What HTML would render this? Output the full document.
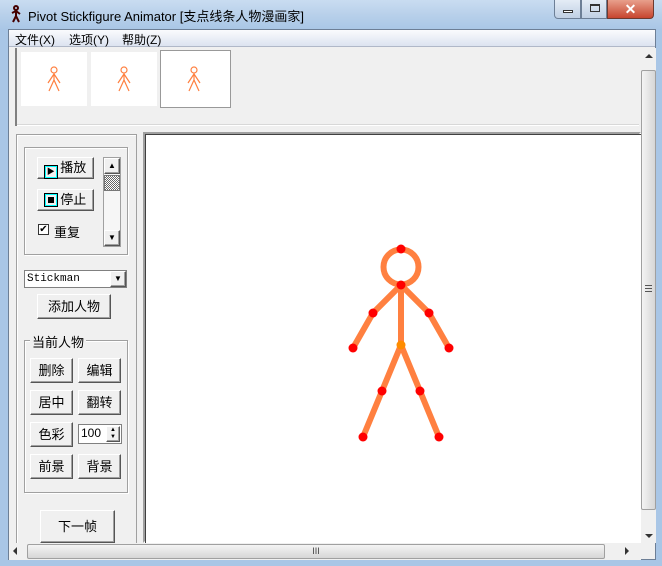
<!DOCTYPE html>
<html><head><meta charset="utf-8"><style>
*{margin:0;padding:0;box-sizing:border-box}
body{width:662px;height:566px;overflow:hidden;background:#a9c6e6;font-family:"Liberation Sans","Noto Sans CJK SC",sans-serif;font-size:12px;color:#000;position:relative}
.abs{position:absolute}
.btn{position:absolute;background:#f0f0f0;border:1px solid;border-color:#fff #555 #555 #fff;box-shadow:-1px -1px 0 #a0a0a0 inset;text-align:center;font-size:13px}
.grp{position:absolute;border:1px solid #a0a0a0;box-shadow:1px 1px 0 #fff inset,1px 1px 0 #fff}
.thumb{position:absolute;top:52px;width:66px;height:54px;background:#fff}
</style></head><body>
<div class="abs" style="left:0;top:0;width:662px;height:30px;background:linear-gradient(#c9dcf1,#b8d0ea 50%,#a9c6e6)"></div>
<svg class="abs" style="left:10px;top:5px" width="12" height="18"><g stroke="#400" stroke-width="2" fill="none"><circle cx="6" cy="3" r="2"/><path d="M6 5V11M2 8L6 6L10 9M3 17L6 11L9 17"/></g></svg>
<div class="abs" style="left:28px;top:6px;font-size:13px;color:#000">Pivot Stickfigure Animator [支点线条人物漫画家]</div>
<div class="abs" style="left:554px;top:0;width:27px;height:19px;border:1px solid #6d7f96;border-top:none;border-radius:0 0 0 4px;background:linear-gradient(#e4ecf6,#c0d0e4)"><div class="abs" style="left:8px;top:10px;width:10px;height:3px;border:1px solid #333;background:#fff"></div></div>
<div class="abs" style="left:581px;top:0;width:26px;height:19px;border:1px solid #6d7f96;border-top:none;background:linear-gradient(#e4ecf6,#c0d0e4)"><div class="abs" style="left:8px;top:4px;width:10px;height:8px;border:1px solid #333;border-top-width:2px"></div></div>
<div class="abs" style="left:607px;top:0;width:47px;height:19px;border:1px solid #6d3a30;border-top:none;border-radius:0 0 4px 0;background:linear-gradient(#e8a08c,#c7452f);color:#fff;font-weight:bold;text-align:center;font-size:14px;line-height:18px">✕</div>
<div class="abs" style="left:8px;top:29px;width:648px;height:531px;background:#f0f0f0;border:1px solid #6d7f96"></div>
<div class="abs" style="left:9px;top:30px;width:646px;height:17px;background:linear-gradient(#fafbfd,#dce3f0);border-bottom:1px solid #b0b8c8"></div>
<div class="abs" style="left:15px;top:31px;font-size:12px">文件(X)</div>
<div class="abs" style="left:69px;top:31px;font-size:12px">选项(Y)</div>
<div class="abs" style="left:122px;top:31px;font-size:12px">帮助(Z)</div>
<div class="abs" style="left:15px;top:48px;width:2px;height:78px;background:#808080"></div>
<div class="abs" style="left:17px;top:124px;width:622px;height:2px;background:#fff;border-top:1px solid #d8d8d8"></div>
<div class="thumb" style="left:21px"></div><div class="thumb" style="left:91px"></div>
<div class="thumb" style="left:160px;top:50px;width:71px;height:58px;border:1px solid #999"></div>
<svg class="abs" style="left:0;top:0" width="662" height="566">
<g stroke="#ff8040" stroke-width="1.2" fill="none">
<g transform="translate(54,0)"><circle cx="0" cy="70" r="3"/><path d="M0 73V80M-6 83L0 74L6 83M-5 91L0 80L5 91"/></g>
<g transform="translate(124,0)"><circle cx="0" cy="70" r="3"/><path d="M0 73V80M-6 83L0 74L6 83M-5 91L0 80L5 91"/></g>
<g transform="translate(194,0)"><circle cx="0" cy="70" r="3"/><path d="M0 73V80M-6 83L0 74L6 83M-5 91L0 80L5 91"/></g>
</g></svg>
<div class="abs" style="left:641px;top:48px;width:15px;height:495px;background:#f0f0f0"></div>
<div class="abs" style="left:645px;top:54px;width:0;height:0;border:4px solid transparent;border-bottom:4px solid #333;border-top:none"></div>
<div class="abs" style="left:641px;top:70px;width:15px;height:440px;border:1px solid #a0a0a0;border-radius:2px;background:linear-gradient(90deg,#f4f4f4,#d6d6d6)"></div>
<div class="abs" style="left:645px;top:285px;width:7px;height:7px;border-top:1px solid #555;border-bottom:1px solid #555;background:linear-gradient(transparent 2px,#555 2px,#555 3px,transparent 3px)"></div>
<div class="abs" style="left:645px;top:534px;border:4px solid transparent;border-top:4px solid #333;border-bottom:none"></div>
<div class="abs" style="left:9px;top:543px;width:632px;height:17px;background:#f0f0f0"></div>
<div class="abs" style="left:13px;top:547px;border:4px solid transparent;border-right:4px solid #333;border-left:none"></div>
<div class="abs" style="left:27px;top:544px;width:578px;height:15px;border:1px solid #a0a0a0;border-radius:2px;background:linear-gradient(#f4f4f4,#d6d6d6);text-align:center;font-size:9px;line-height:13px;color:#444">III</div>
<div class="abs" style="left:625px;top:547px;border:4px solid transparent;border-left:4px solid #333;border-right:none"></div>
<div class="abs" style="left:16px;top:134px;width:121px;height:409px;border:1px solid #a0a0a0;border-bottom:none;box-shadow:1px 1px 0 #fff inset"></div>
<div class="abs" style="left:143px;top:132px;width:498px;height:411px;border:2px solid;border-color:#a0a0a0 #fff #fff #a0a0a0;background:#fff"></div>
<div class="abs" style="left:145px;top:134px;width:1px;height:409px;background:#404040"></div>
<div class="abs" style="left:145px;top:134px;width:496px;height:1px;background:#404040"></div>
<div class="grp" style="left:24px;top:147px;width:104px;height:108px"></div>
<div class="btn" style="left:37px;top:157px;width:57px;height:22px;line-height:20px"><span style="display:inline-block;width:12px;height:12px;border:1px solid #0ff;outline:1px solid #000;vertical-align:-2px;font-size:8px;line-height:10px">▶</span> 播放</div>
<div class="btn" style="left:37px;top:189px;width:57px;height:22px;line-height:20px"><span style="display:inline-block;width:12px;height:12px;border:1px solid #0ff;outline:1px solid #000;vertical-align:-2px;position:relative"><span style="position:absolute;left:2px;top:2px;width:6px;height:6px;background:#000"></span></span> 停止</div>
<div class="abs" style="left:38px;top:224px;width:11px;height:11px;border:1px solid #333;background:#fff;font-size:10px;line-height:9px;text-align:center">✔</div>
<div class="abs" style="left:54px;top:222px;font-size:13px">重复</div>
<div class="abs" style="left:103px;top:157px;width:18px;height:90px;background:#f6f6f6;border:1px solid #a0a0a0"></div>
<div class="btn" style="left:104px;top:158px;width:16px;height:16px;font-size:8px;line-height:14px">▲</div>
<div class="abs" style="left:104px;top:175px;width:16px;height:16px;background:repeating-conic-gradient(#666 0 25%,#fff 0 50%) 0 0/2px 2px;border:1px solid #777"></div>
<div class="btn" style="left:104px;top:230px;width:16px;height:16px;font-size:8px;line-height:14px">▼</div>
<div class="abs" style="left:24px;top:270px;width:103px;height:18px;border:1px solid #808080;background:#fff;font-family:'Liberation Mono',monospace;font-size:11px;line-height:16px;padding-left:2px">Stickman</div>
<div class="btn" style="left:110px;top:271px;width:16px;height:16px;font-size:8px;line-height:14px">▼</div>
<div class="btn" style="left:37px;top:294px;width:74px;height:25px;line-height:23px">添加人物</div>
<div class="grp" style="left:24px;top:340px;width:104px;height:153px"></div>
<div class="abs" style="left:30px;top:332px;background:#f0f0f0;font-size:13px;padding:0 2px">当前人物</div>
<div class="btn" style="left:30px;top:358px;width:43px;height:25px;line-height:23px">删除</div>
<div class="btn" style="left:78px;top:358px;width:43px;height:25px;line-height:23px">编辑</div>
<div class="btn" style="left:30px;top:390px;width:43px;height:25px;line-height:23px">居中</div>
<div class="btn" style="left:78px;top:390px;width:43px;height:25px;line-height:23px">翻转</div>
<div class="btn" style="left:30px;top:422px;width:43px;height:25px;line-height:23px">色彩</div>
<div class="abs" style="left:78px;top:424px;width:44px;height:20px;border:1px solid #808080;background:#fff;font-size:12px;line-height:17px;padding-left:2px">100</div>
<div class="btn" style="left:106px;top:426px;width:14px;height:16px;font-size:6px;line-height:7px">▲<br>▼</div>
<div class="btn" style="left:30px;top:454px;width:43px;height:25px;line-height:23px">前景</div>
<div class="btn" style="left:78px;top:454px;width:43px;height:25px;line-height:23px">背景</div>
<div class="btn" style="left:40px;top:510px;width:75px;height:33px;line-height:31px">下一帧</div>
<svg class="abs" style="left:0;top:0" width="662" height="566">
<g stroke="#ff8040" stroke-width="6" fill="none" stroke-linecap="round">
<circle cx="401" cy="267" r="17.5"/>
<path d="M401 285V345M401 285L373 313L353 348M401 285L429 313L449 348M401 345L382 391L363 437M401 345L420 391L439 437"/>
</g>
<g fill="#f00">
<circle cx="401" cy="249" r="4.5"/><circle cx="401" cy="285" r="4.5"/><circle cx="373" cy="313" r="4.5"/><circle cx="429" cy="313" r="4.5"/><circle cx="353" cy="348" r="4.5"/><circle cx="449" cy="348" r="4.5"/><circle cx="382" cy="391" r="4.5"/><circle cx="420" cy="391" r="4.5"/><circle cx="363" cy="437" r="4.5"/><circle cx="439" cy="437" r="4.5"/>
</g>
<circle cx="401" cy="345" r="4.5" fill="#ff8c00"/>
</svg>
</body></html>
